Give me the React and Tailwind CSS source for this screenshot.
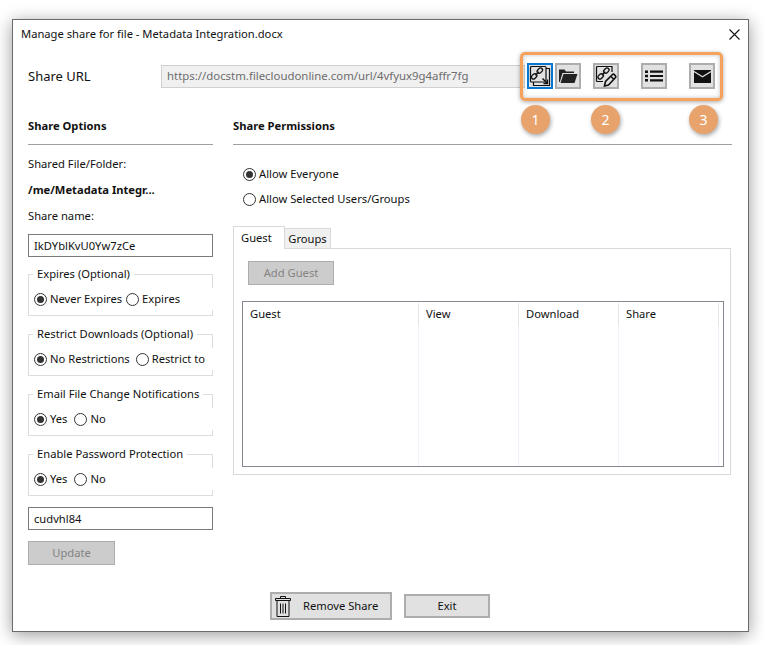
const Radio = ({ on }) => (
  <span className="w-[13px] h-[13px] shrink-0 rounded-full border border-[#333333] bg-white flex items-center justify-center">
    {on && <span className="w-[7px] h-[7px] rounded-full bg-[#333333]" />}
  </span>
);

const Opt = ({ on, label, className = "" }) => (
  <span className={`flex items-center gap-[3px] whitespace-nowrap ${className}`}>
    <Radio on={on} />
    <span>{label}</span>
  </span>
);

const Group = ({ title, children, className = "" }) => (
  <fieldset className={`h-[50px] w-[185px] border border-[#dcdcdc] ${className}`}>
    <legend className="ml-[4px] px-[4px] h-[16px] leading-[16px] whitespace-nowrap">{title}</legend>
    <div className="mt-[6px] -mr-px h-[22px] bg-white flex items-center pl-[5px] overflow-hidden">{children}</div>
  </fieldset>
);

const IconBtn = ({ active, className = "", children }) => (
  <button className={`w-[26px] h-[26px] flex items-center justify-center bg-[#e1e1e1] border-2 ${active ? "border-[#0078d7]" : "border-[#adadad]"} ${className}`}>
    {children}
  </button>
);

const Chain = ({ x, y }) => (
  <g transform={`translate(${x} ${y}) rotate(-45)`} fill="none" stroke="#111" strokeWidth="1.3">
    <rect x="-7" y="-2" width="6" height="4" rx="2" />
    <rect x="1" y="-2" width="6" height="4" rx="2" />
    <path d="M-2.5 0H2.5" />
  </g>
);

const LinkCopyIcon = () => (
  <svg width="22" height="22" viewBox="0 0 22 22">
    <path d="M17 3.5H20.5V20.5H4.5V17" fill="none" stroke="#111" strokeWidth="1.2" />
    <rect x="1.5" y="1.5" width="15.5" height="15.5" rx="1" fill="#e1e1e1" stroke="#111" strokeWidth="1.2" />
    <Chain x={8} y={8.5} />
    <path d="M13.5 13.5L18.5 18.5" fill="none" stroke="#111" strokeWidth="1.4" />
    <path d="M18.5 14.5V18.5H14.5" fill="none" stroke="#111" strokeWidth="1.3" />
  </svg>
);

const FolderIcon = () => (
  <svg width="20" height="16" viewBox="0 0 20 16">
    <path d="M1 14V1.5H6.5L8 3.5H16V5H4.5L1.8 14Z" fill="#222" />
    <path d="M5.5 6H19.5L16.5 15H2.5Z" fill="#222" />
  </svg>
);

const LinkEditIcon = () => (
  <svg width="22" height="22" viewBox="0 0 22 22">
    <path d="M1.5 16.5V2.5a1 1 0 0 1 1-1H17V7M1.5 16.5H8" fill="none" stroke="#111" strokeWidth="1.2" />
    <Chain x={8.5} y={8.5} />
    <path d="M9.5 21L10.5 16.5L17.5 9.5C18.6 8.4 21.6 11.2 20.5 12.5L13.5 20Z" fill="#e1e1e1" stroke="#111" strokeWidth="1.6" />
    <path d="M16 11.5L19 14.5" stroke="#111" strokeWidth="1.6" />
  </svg>
);

const ListIcon = () => (
  <svg width="18" height="12" viewBox="0 0 18 12">
    <path d="M0 0.5h3v2.4H0zM0 4.8h3v2.4H0zM0 9.1h3v2.4H0zM5 0.6h13v2.2H5zM5 4.9h13v2.2H5zM5 9.2h13v2.2H5z" fill="#111" />
  </svg>
);

const MailIcon = () => (
  <svg width="17" height="13" viewBox="0 0 17 13">
    <rect width="17" height="13" fill="#111" />
    <path d="M0 1.5L8.5 6.8L17 1.5" fill="none" stroke="#e1e1e1" strokeWidth="1.1" />
  </svg>
);

const TrashIcon = () => (
  <svg width="16" height="21" viewBox="0 0 16 21" fill="none" stroke="#111" strokeWidth="1">
    <path d="M5.5 2.5V.5H10.5V2.5" />
    <path d="M.5 2.5H15.5V4.5H.5Z" />
    <path d="M2 4.5V20.5H14V4.5" />
    <path d="M5.5 7.5V17.5M8 7.5V17.5M10.5 7.5V17.5" />
  </svg>
);

const Badge = ({ n, className }) => (
  <div className={`absolute top-[85px] w-[29px] h-[29px] rounded-full bg-[#e8a36c] text-white text-[14px] flex items-center justify-center shadow-[1px_2px_4px_rgba(0,0,0,0.35)] ${className}`}>
    {n}
  </div>
);

const Col = ({ title, w }) => (
  <div className={`${w} flex flex-col pt-px`}>
    <div className="h-[23px] pl-[7px] pb-px flex items-center border-r border-[#e5e5e5]">{title}</div>
    <div className="flex-1 border-r border-[#eef3fb]" />
  </div>
);

export default function App() {
  return (
    <div className="w-[765px] h-[645px] bg-white overflow-hidden pt-[19px] pl-[12px] text-[11.2px] leading-[18px] text-[#111111] font-['Noto_Sans','Open_Sans',sans-serif]">
      <div className="relative w-[737px] h-[613px] bg-white border border-[#6b6b6b] flex flex-col shadow-[0_3px_16px_rgba(0,0,0,0.4)]">
        <div className="h-[28px] flex items-center justify-between pl-[8px] pr-[8px]">
          <span>Manage share for file - Metadata Integration.docx</span>
          <svg width="11" height="11" viewBox="0 0 11 11" stroke="#111" strokeWidth="1.1">
            <path d="M.5.5L10.5 10.5M10.5.5L.5 10.5" />
          </svg>
        </div>

        <div className="mt-[15px] h-[26px] pl-[15px] flex items-center">
          <span className="w-[133px] text-[13px]">Share URL</span>
          <div className="w-[364px] h-[23px] bg-[#f0f0f0] border border-[#d0d0d0] pl-[5px] flex items-center text-[11.4px] text-[#6d6d6d]">
            https://docstm.filecloudonline.com/url/4vfyux9g4affr7fg
          </div>
          <IconBtn active className="ml-[2px]"><LinkCopyIcon /></IconBtn>
          <IconBtn className="ml-[2px]"><FolderIcon /></IconBtn>
          <IconBtn className="ml-[12px]"><LinkEditIcon /></IconBtn>
          <IconBtn className="ml-[22px]"><ListIcon /></IconBtn>
          <IconBtn className="ml-[22px]"><MailIcon /></IconBtn>
        </div>

        <div className="flex-1 flex pl-[15px] gap-[20px]">
          <div className="w-[185px] flex flex-col">
            <div className="mt-[27px] h-[29px] pb-[9px] border-b border-[#a0a0a0] font-bold leading-[20px]">Share Options</div>
            <div className="mt-[10px]">Shared File/Folder:</div>
            <div className="mt-[8px] font-bold">/me/Metadata Integr...</div>
            <div className="mt-[8px]">Share name:</div>
            <div className="mt-[9px] h-[23px] w-[185px] border border-[#7a7a7a] pl-[5px] flex items-center">IkDYblKvU0Yw7zCe</div>
            <Group title="Expires (Optional)" className="mt-[9px]">
              <Opt on label="Never Expires" />
              <Opt label="Expires" className="ml-[4px]" />
            </Group>
            <Group title="Restrict Downloads (Optional)" className="mt-[10px]">
              <Opt on label="No Restrictions" />
              <Opt label="Restrict to" className="ml-[6px]" />
            </Group>
            <Group title="Email File Change Notifications" className="mt-[10px]">
              <Opt on label="Yes" />
              <Opt label="No" className="ml-[7px]" />
            </Group>
            <Group title="Enable Password Protection" className="mt-[10px]">
              <Opt on label="Yes" />
              <Opt label="No" className="ml-[7px]" />
            </Group>
            <div className="mt-[11px] h-[23px] border border-[#7a7a7a] pl-[5px] flex items-center">cudvhl84</div>
            <button className="mt-[11px] w-[87px] h-[24px] bg-[#cccccc] border border-[#adadad] text-[#838383]">Update</button>
          </div>

          <div className="w-[499px] flex flex-col">
            <div className="mt-[27px] h-[29px] pb-[9px] border-b border-[#a0a0a0] font-bold leading-[20px]">Share Permissions</div>
            <Opt on label="Allow Everyone" className="mt-[20px] ml-[10px]" />
            <Opt label="Allow Selected Users/Groups" className="mt-[7px] ml-[10px]" />
            <div className="mt-[18px] flex items-end h-[22px]">
              <div className="relative z-10 w-[52px] h-[23px] -mb-px bg-white border border-b-0 border-[#d9d9d9] pl-[7px] flex items-center">Guest</div>
              <div className="w-[46px] h-[20px] bg-[#f0f0f0] border border-l-0 border-b-0 border-[#d9d9d9] flex items-center justify-center">Groups</div>
            </div>
            <div className="w-[498px] h-[227px] border border-[#d9d9d9] flex flex-col">
              <button className="mt-[12px] ml-[14px] w-[86px] h-[24px] bg-[#cccccc] border border-[#adadad] text-[#838383]">Add Guest</button>
              <div className="mt-[16px] ml-[8px] w-[482px] h-[166px] border border-[#828790] flex">
                <Col title="Guest" w="w-[176px]" />
                <Col title="View" w="w-[100px]" />
                <Col title="Download" w="w-[100px]" />
                <Col title="Share" w="w-[100px]" />
              </div>
            </div>
          </div>
        </div>

        <div className="pl-[257px] pb-[11px] flex items-center gap-[12px]">
          <button className="w-[122px] h-[28px] bg-[#e1e1e1] border-2 border-[#adadad] flex items-center pl-[3px]">
            <TrashIcon />
            <span className="ml-[12px]">Remove Share</span>
          </button>
          <button className="w-[86px] h-[24px] bg-[#e1e1e1] border-2 border-[#adadad] flex items-center justify-center">Exit</button>
        </div>

        <div className="absolute left-[507px] top-[32px] w-[203px] h-[49px] rounded-[5px] border-[3px] border-[#f5a25c] shadow-[0_1px_4px_rgba(0,0,0,0.35),inset_0_0_4px_rgba(0,0,0,0.25)]" />
        <Badge n="1" className="left-[508px]" />
        <Badge n="2" className="left-[578px]" />
        <Badge n="3" className="left-[676px]" />
      </div>
    </div>
  );
}
